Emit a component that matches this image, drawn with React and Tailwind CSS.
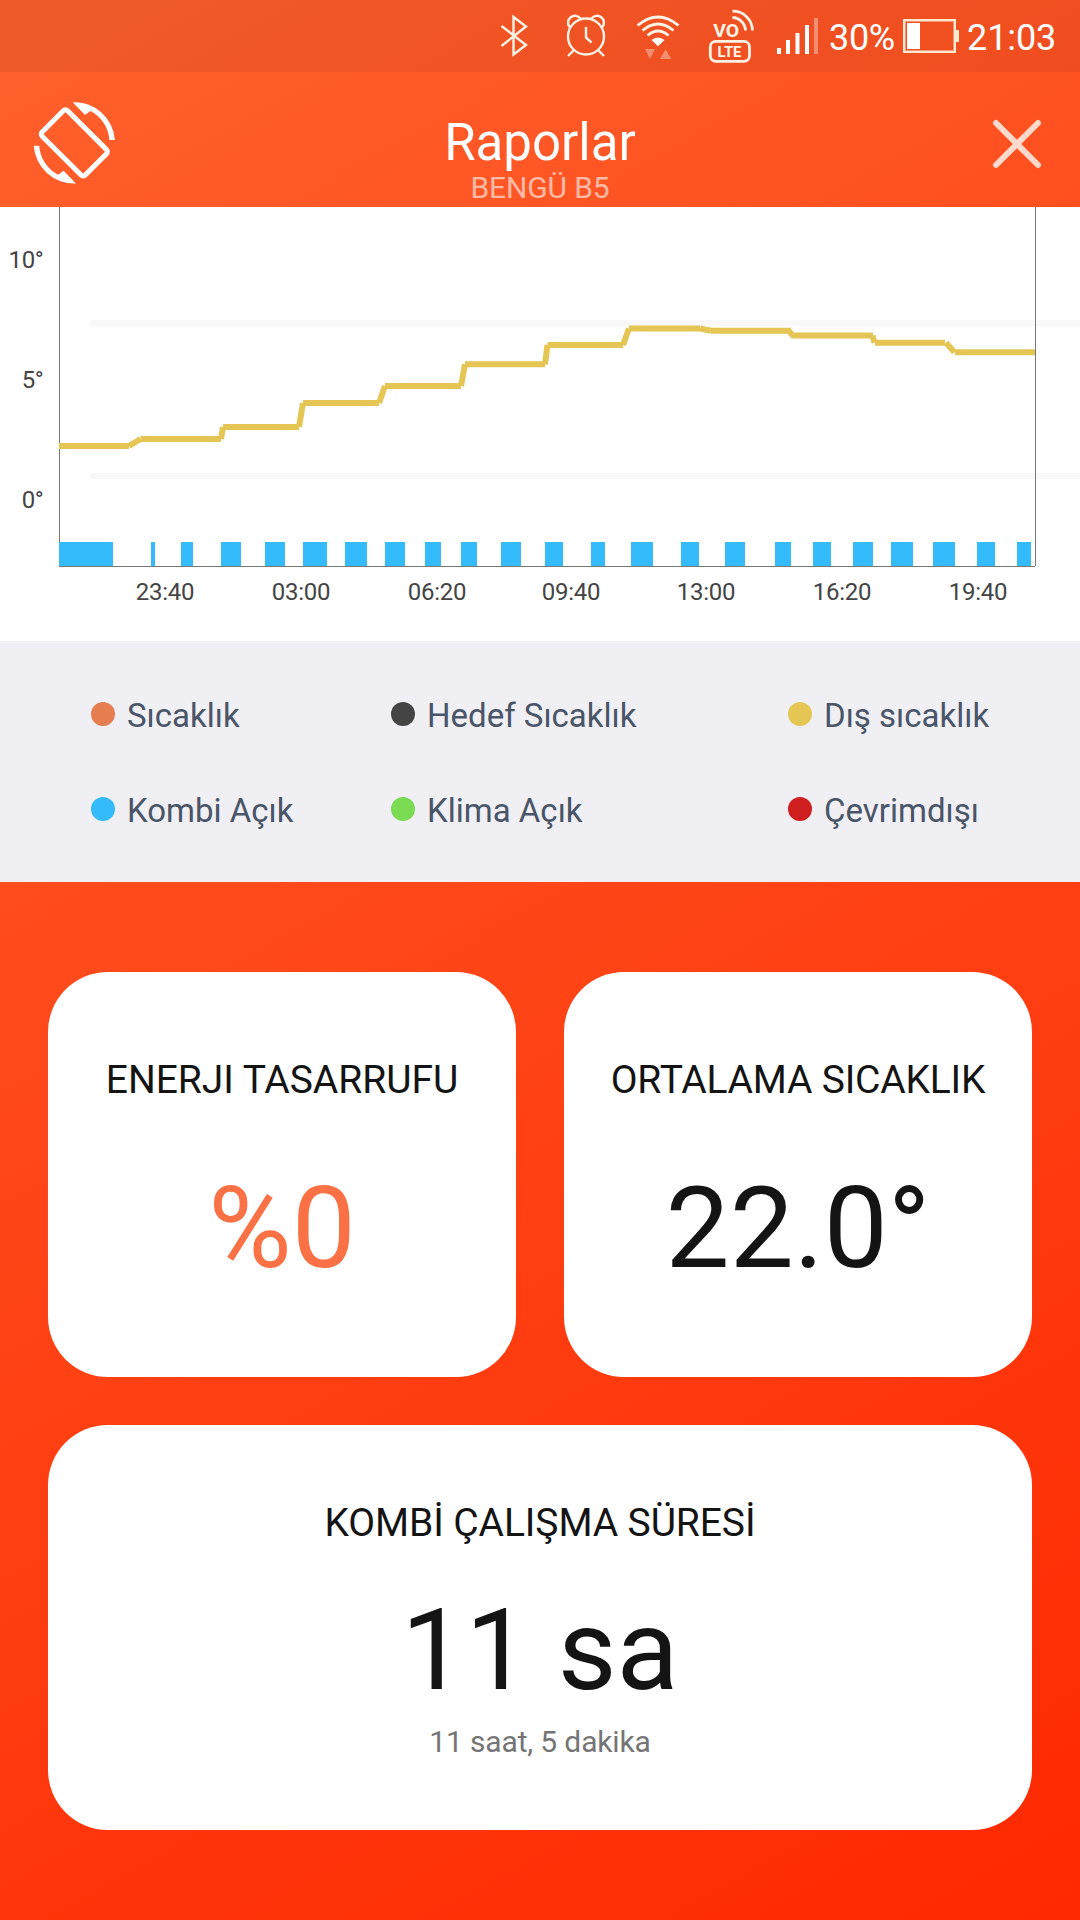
import React from "react";

// [x1, y1, x2, y2]
const outdoorSegments = [
  [59, 239, 129, 239],
  [129, 239, 140.5, 232],
  [140.5, 232, 221, 232],
  [221, 232, 223, 220],
  [223, 220, 299, 220],
  [299, 220, 303, 196],
  [303, 196, 379, 196],
  [379, 196, 385, 179],
  [385, 179, 461, 179],
  [461, 179, 465, 157.3],
  [465, 157.3, 545, 157.3],
  [545, 157.3, 547.5, 138],
  [547.5, 138, 623, 138],
  [623, 138, 629, 121.5],
  [629, 121.5, 700, 121.5],
  [700, 121.5, 711, 123.8],
  [711, 123.8, 791, 123.8],
  [789, 124, 792.5, 128.5],
  [791, 128.5, 873, 128.5],
  [872.5, 128.5, 874.5, 135.8],
  [875, 135.8, 945, 135.8],
  [946, 135.8, 954.5, 145.3],
  [955, 145.3, 1035, 145.3],
];

// [start, end]
const boilerBars = [
  [59, 113],
  [151, 155],
  [181, 193],
  [221, 241],
  [265, 285],
  [303, 327],
  [345, 367],
  [385, 405],
  [425, 441],
  [461, 477],
  [501, 521],
  [545, 563],
  [591, 605],
  [631, 653],
  [681, 699],
  [725, 745],
  [775, 791],
  [813, 831],
  [853, 873],
  [891, 913],
  [933, 955],
  [977, 995],
  [1017, 1031],
];

const hours = [
  { label: "23:40", x: 165 },
  { label: "03:00", x: 301 },
  { label: "06:20", x: 437 },
  { label: "09:40", x: 571 },
  { label: "13:00", x: 706 },
  { label: "16:20", x: 842 },
  { label: "19:40", x: 978 },
];

const degrees = [
  { label: "10°", y: 61 },
  { label: "5°", y: 181 },
  { label: "0°", y: 301 },
];

function StatusBar() {
  return (
    <div className="h-[72px] flex items-center bg-black/6 pl-[500px] text-[36px] leading-none text-white">
      {/* bluetooth */}
      <svg width="28" height="72" fill="none" stroke="#fff3e6" strokeWidth="2.4">
        <path d="M1.5 26 L26 45 L13.5 54.5 V17 L26 26.5 L1.5 46" />
      </svg>
      {/* alarm */}
      <svg className="ml-[38px]" width="40" height="72" fill="none" stroke="#fff3e6" strokeWidth="2.4">
        <circle cx="20" cy="36.5" r="18" />
        <path d="M20 27 V37.5 L25.5 42.5" />
        <path d="M3.5 27 A6.5 6.5 0 1 1 14.5 18.5" />
        <path d="M36.5 27 A6.5 6.5 0 1 0 25.5 18.5" />
        <path d="M8 50 L2 56 M32 50 L38 56" />
      </svg>
      {/* wifi */}
      <svg className="ml-[30px]" width="44" height="72" fill="none" stroke="#fff3e6" strokeWidth="2.8">
        <path d="M1.5 25.5 Q22 8.5 42.5 25.5" />
        <path d="M6.5 30.5 Q22 17.5 37.5 30.5" />
        <path d="M11.5 35.5 Q22 26.5 32.5 35.5" />
        <path d="M15.5 40 Q22 35 28.5 40 L22 46.3 Z" fill="#fff" stroke="none" />
        <path d="M9 49 H19 L14 59 Z M24 59 H35.5 L29.5 49.5 Z" fill="#fff" fillOpacity=".35" stroke="none" />
      </svg>
      {/* volte */}
      <svg className="ml-[28px]" width="48" height="72" fill="none" stroke="#fff3e6" strokeWidth="2.8">
        <path d="M24.5 11.2 A19.5 19.5 0 0 1 44.5 30.5" />
        <path d="M24.5 17.5 A13.5 13.5 0 0 1 37.5 30.5" />
        <rect x="2.3" y="41.3" width="39.2" height="20" rx="5.5" />
        <text x="5.2" y="37" fontSize="19" fontWeight="700" fill="#fff3e6" stroke="none" textLength="26" lengthAdjust="spacingAndGlyphs">VO</text>
        <text x="9.5" y="57" fontSize="15.5" fontWeight="700" fill="#fff3e6" stroke="none" textLength="24" lengthAdjust="spacingAndGlyphs">LTE</text>
      </svg>
      {/* signal */}
      <svg className="ml-[21px]" width="42" height="72" fill="#fff">
        <rect x="0" y="48" width="4" height="6" />
        <rect x="9" y="40" width="4" height="14" />
        <rect x="18.5" y="33" width="4" height="21" />
        <rect x="28" y="25" width="4" height="29" />
        <rect x="37" y="18" width="4" height="36" fillOpacity=".35" />
      </svg>
      <span className="ml-[10px] w-[74px] pt-[3px] tracking-[-0.3px]">30%</span>
      {/* battery */}
      <svg width="58" height="72" fill="none">
        <rect x="1" y="20" width="51" height="32" stroke="#ffe9cf" strokeWidth="2" />
        <rect x="2.5" y="21.5" width="48" height="29" stroke="#fff" strokeOpacity=".4" />
        <rect x="4" y="23" width="13" height="26" fill="#fff" />
        <rect x="53" y="30" width="3" height="12" fill="#ffe9cf" />
      </svg>
      <span className="ml-[6px] pt-[3px] tracking-[-0.1px]">21:03</span>
    </div>
  );
}

function Header() {
  return (
    <div className="h-[135px] flex justify-between">
      <svg className="mt-[28px] ml-[32px]" width="84" height="86" fill="#fff">
        <rect x="24.3" y="12.4" width="36" height="61" rx="3" fill="none" stroke="#fff" strokeWidth="5" transform="rotate(-45 42.3 42.9)" />
        <path d="M40.7 2.3 A40.5 40.5 0 0 1 82.9 40 H77.4 A35.5 35.5 0 0 0 58.5 11 L53 15 Z" />
        <path d="M40.7 2.3 A40.5 40.5 0 0 1 82.9 40 H77.4 A35.5 35.5 0 0 0 58.5 11 L53 15 Z" transform="rotate(180 42.3 42.9)" />
      </svg>
      <div className="flex flex-col items-center pt-[41px]">
        <h1 className="text-[51px] leading-[60px] text-white">Raporlar</h1>
        <h2 className="-mt-px text-[30px] leading-[32px] tracking-[-0.15px] text-white/60">BENGÜ B5</h2>
      </div>
      <svg className="mt-[46px] ml-[26px] mr-[36px]" width="54" height="54" stroke="#ffd9cc" strokeWidth="6" strokeLinecap="round">
        <path d="M6 5 L48 47 M48 5 L6 47" />
      </svg>
    </div>
  );
}

function Chart() {
  return (
    <svg className="block bg-white tracking-[-0.3px]" width="1080" height="434" fontSize="24" fill="#444">
      <rect x="90" y="113" width="990" height="6" fill="#f9f9f9" />
      <rect x="90" y="266" width="990" height="6" fill="#f9f9f9" />
      <rect x="59" y="0" width="1" height="359" fill="#777" />
      {outdoorSegments.map(([x1, y1, x2, y2]) => (
        <line key={x1} x1={x1} y1={y1} x2={x2} y2={y2} stroke="#e5c654" strokeWidth="6" />
      ))}
      {boilerBars.map(([start, end]) => (
        <rect key={start} x={start} y="335" width={end - start} height="24" fill="#33bbfb" />
      ))}
      <rect x="59" y="359" width="976" height="1" fill="#777" />
      <rect x="1035" y="0" width="1" height="359" fill="#777" />
      {degrees.map((d) => (
        <text key={d.label} x="43.5" y={d.y} textAnchor="end">
          {d.label}
        </text>
      ))}
      {hours.map((h) => (
        <text key={h.label} x={h.x} y="393" textAnchor="middle">
          {h.label}
        </text>
      ))}
    </svg>
  );
}

function LegendItem({ color, label }) {
  return (
    <div className="flex items-center h-[40px]">
      <div className={"w-6 h-6 rounded-full " + color}></div>
      <span className="ml-3 pt-1 text-[33px] leading-[38px] text-[#4a5568]">{label}</span>
    </div>
  );
}

function Legend() {
  return (
    <div className="h-[241px] bg-[#efeff4] pt-[53px] pl-[91px] grid grid-cols-[300px_397px_auto] content-start gap-y-[55px]">
      <LegendItem color="bg-[#e67e52]" label="Sıcaklık" />
      <LegendItem color="bg-[#444444]" label="Hedef Sıcaklık" />
      <LegendItem color="bg-[#e5c654]" label="Dış sıcaklık" />
      <LegendItem color="bg-[#33bbfb]" label="Kombi Açık" />
      <LegendItem color="bg-[#7bdb53]" label="Klima Açık" />
      <LegendItem color="bg-[#d01f1f]" label="Çevrimdışı" />
    </div>
  );
}

export default function App() {
  return (
    <div
      className="w-[1080px] h-[1920px] overflow-hidden bg-[linear-gradient(151deg,#ff612d,#ff2800)] font-['Roboto',sans-serif]"
      lang="tr"
    >
      <StatusBar />
      <Header />
      <Chart />
      <Legend />
      {/*cards*/}
      <div className="grid grid-cols-2 gap-12 px-12 pt-[90px] text-center text-[#141414]">
        <div className="h-[405px] rounded-[60px] bg-white pt-[85px]">
          <h3 className="text-[39px] leading-[46px] tracking-[-0.05px]">ENERJI TASARRUFU</h3>
          <p className="mt-[57px] text-[114px] leading-[136px] text-[#f97144]">%0</p>
        </div>
        <div className="h-[405px] rounded-[60px] bg-white pt-[85px]">
          <h3 className="text-[39px] leading-[46px] tracking-[-0.2px]">ORTALAMA SICAKLIK</h3>
          <p className="mt-[57px] text-[114px] leading-[136px]">22.0°</p>
        </div>
        <div className="col-span-2 h-[405px] rounded-[60px] bg-white pt-[75px]">
          <h3 className="text-[39px] leading-[46px] tracking-[-0.1px]">KOMBİ ÇALIŞMA SÜRESİ</h3>
          <p className="mt-[36px] text-[114px] leading-[136px]">11 sa</p>
          <p className="mt-[6px] text-[30px] leading-[36px] tracking-[-0.15px] text-[#757575]">11 saat, 5 dakika</p>
        </div>
      </div>
    </div>
  );
}
